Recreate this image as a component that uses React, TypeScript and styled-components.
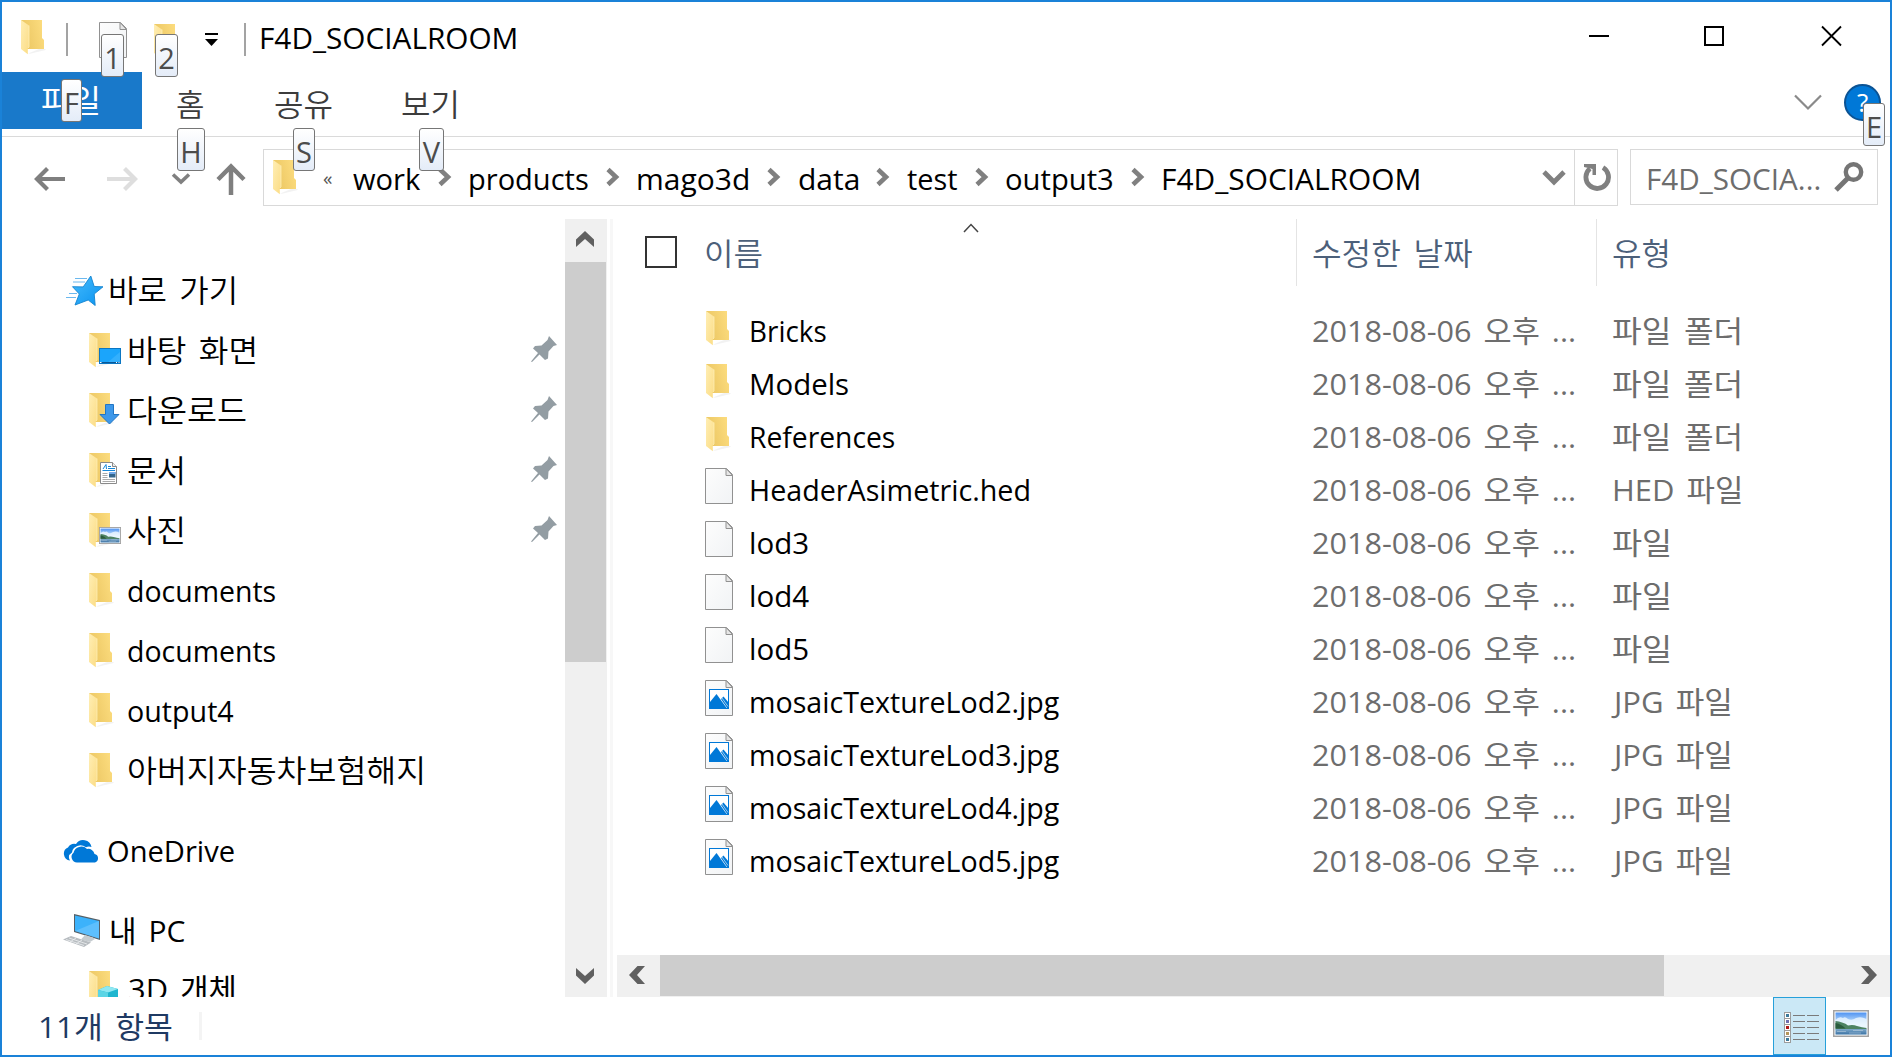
import React, { useLayoutEffect, useRef, useState } from "react";
import styled, { createGlobalStyle, css } from "styled-components";

const GlobalStyle = createGlobalStyle`
  * { box-sizing: border-box; }
  body { margin: 0; background: #fff; overflow: hidden; }
  svg { display: block; flex: none; }
`;

/* ---------- text fitted to a set width ---------- */

const FitBox = styled.span<{ $w: number }>`
  display: block;
  flex: none;
  width: ${(p) => p.$w}px;
  white-space: nowrap;
`;

const FitInner = styled.span<{ $size: number; $color: string; $weight: number }>`
  display: inline-block;
  transform-origin: 0 50%;
  font-family: "Open Sans", "Noto Sans CJK KR", sans-serif;
  font-size: ${(p) => p.$size}px;
  font-weight: ${(p) => p.$weight};
  line-height: 40px;
  word-spacing: 4px;
  color: ${(p) => p.$color};
`;

interface FitProps {
  children: string;
  w: number;
  size?: number;
  color?: string;
  weight?: number;
}

function Fit({ children, w, size = 30, color = "#000", weight = 400 }: FitProps) {
  const ref = useRef<HTMLSpanElement>(null);
  const [scale, setScale] = useState(1);
  useLayoutEffect(() => {
    if (ref.current) setScale(w / ref.current.offsetWidth);
  }, [w, children, size]);
  return (
    <FitBox $w={w}>
      <FitInner ref={ref} $size={size} $color={color} $weight={weight} style={{ transform: `scaleX(${scale})` }}>
        {children}
      </FitInner>
    </FitBox>
  );
}

/* ---------- window ---------- */

const Window = styled.div`
  width: 1892px;
  height: 1057px;
  border: 2px solid #1a82d8;
  background: #fff;
  display: flex;
  flex-direction: column;
  overflow: hidden;
`;

const TitleBar = styled.header`
  height: 70px;
  flex: none;
  display: flex;
  align-items: flex-start;
  padding-left: 19px;
`;

const QuickItem = styled.div<{ $ml: number; $mt: number }>`
  position: relative;
  margin: ${(p) => p.$mt}px 0 0 ${(p) => p.$ml}px;
`;

const Rule = styled.div<{ $ml: number }>`
  width: 2px;
  height: 33px;
  margin: 21px 0 0 ${(p) => p.$ml}px;
  background: #a3a3a3;
`;

const TitleText = styled.h1`
  margin: 16px 0 0 13px;
  font-weight: 400;
`;

const WindowButtons = styled.div`
  display: flex;
  margin: 23px 48px 0 auto;
  gap: 93px;
`;

const KeyTip = styled.kbd<{ $x: number; $y: number; $w: number }>`
  position: absolute;
  z-index: 2;
  left: ${(p) => p.$x}px;
  top: ${(p) => p.$y}px;
  width: ${(p) => p.$w}px;
  height: 43px;
  border: 1px solid #767676;
  border-radius: 3px;
  background: linear-gradient(#fff, #e4ecf8);
  display: flex;
  align-items: center;
  justify-content: center;
  font: 400 29px/38px "Open Sans", sans-serif;
  color: #4c4c4c;
  padding-top: 4px;
`;

const TabRow = styled.nav`
  height: 65px;
  flex: none;
  display: flex;
  border-bottom: 1px solid #dadada;
`;

const FileTab = styled.div`
  position: relative;
  width: 140px;
  height: 57px;
  padding: 8px 0 0 39px;
  background: #1979ca;
`;

const Tab = styled.div<{ $ml: number }>`
  position: relative;
  margin-left: ${(p) => p.$ml}px;
  padding-top: 12px;
`;

const RibbonTools = styled.div`
  position: relative;
  margin: 10px 9px 0 auto;
  display: flex;
  gap: 21px;
  align-items: center;
  height: 40px;
`;

const Help = styled.div`
  width: 37px;
  height: 37px;
  border-radius: 50%;
  border: 2px solid #0b5394;
  background: #0078d7;
  color: #fff;
  font: 400 26px/32px "Open Sans", sans-serif;
  text-align: center;
`;

const NavRow = styled.div`
  height: 82px;
  flex: none;
  display: flex;
  padding-top: 12px;
`;

const NavArrows = styled.div`
  width: 261px;
  height: 57px;
  padding: 2px 0 0 32px;
  display: flex;
  align-items: center;
`;

const Gap = styled.div<{ $w: number }>`
  flex: none;
  width: ${(p) => p.$w}px;
`;

const AddressBox = styled.div`
  width: 1355px;
  height: 57px;
  border: 1px solid #d9d9d9;
  display: flex;
  align-items: center;
  padding-left: 8px;
`;

const Older = styled.span`
  width: 12px;
  margin-left: 17px;
  font: 400 19px/20px "Open Sans", sans-serif;
  color: #555;
`;

const Crumb = styled.span<{ $ml: number }>`
  margin: 3px 0 0 ${(p) => p.$ml}px;
`;

const CrumbMark = styled.span`
  margin-bottom: 2px;
`;

const AddressTools = styled.div`
  margin-left: auto;
  height: 100%;
  display: flex;
  align-items: center;
`;

const RefreshCell = styled.div`
  width: 43px;
  height: 100%;
  margin-left: 7px;
  padding-left: 2px;
  border-left: 1px solid #d9d9d9;
  display: flex;
  align-items: center;
  justify-content: center;
`;

const SearchBox = styled.div`
  width: 248px;
  height: 56px;
  margin-left: 12px;
  border: 1px solid #d9d9d9;
  display: flex;
  align-items: center;
  padding: 0 13px 0 15px;
  justify-content: space-between;
`;

const SearchText = styled.div`
  margin-top: 3px;
`;

const Body = styled.div`
  height: 778px;
  flex: none;
  display: flex;
`;

const Sidebar = styled.aside`
  width: 563px;
  height: 778px;
  overflow: hidden;
  padding-top: 41px;
`;

const TreeRow = styled.div<{ $level: number; $gap?: number }>`
  height: 60px;
  margin-top: ${(p) => p.$gap ?? 0}px;
  padding-left: ${(p) => (p.$level ? 86 : 61)}px;
  display: flex;
  align-items: center;
`;

const TreeIcon = styled.div<{ $w: number; $dx?: number }>`
  width: ${(p) => p.$w}px;
  padding: 2px 0 0 ${(p) => p.$dx ?? 0}px;
`;

const TreeLabel = styled.div<{ $latin?: boolean }>`
  padding-top: ${(p) => (p.$latin ? 1 : 0)}px;
`;

const PinSlot = styled.div`
  margin: 0 8px 2px auto;
`;

const VScroll = styled.div`
  width: 42px;
  height: 778px;
  background: #f0f0f0;
  display: flex;
  flex-direction: column;
  align-items: center;
`;

const VThumb = styled.div`
  width: 41px;
  height: 400px;
  align-self: flex-start;
  background: #cdcdcd;
`;

const arrowCell = css`
  display: flex;
  align-items: center;
  justify-content: center;
`;

const VArrow = styled.div`
  ${arrowCell}
  width: 42px;
  height: 43px;
  padding: 0 2px 4px 0;
  &:last-child { margin-top: auto; padding-bottom: 0; }
`;

const Divider = styled.div`
  width: 3px;
  margin: 0 4px 0 3px;
  background: #f7f7f7;
`;

const Main = styled.main`
  flex: 1;
  display: flex;
  flex-direction: column;
`;

const HeadRow = styled.div`
  height: 67px;
  display: flex;
  padding-left: 28px;
`;

const CheckBox = styled.div`
  width: 32px;
  height: 32px;
  margin-top: 17px;
  border: 2px solid #333;
`;

const HeadCell = styled.div<{ $w: number; $pl: number; $line?: boolean }>`
  position: relative;
  width: ${(p) => p.$w}px;
  padding: 14px 0 0 ${(p) => p.$pl}px;
  border-left: ${(p) => (p.$line ? "1px solid #e4e4e4" : "0")};
`;

const SortMark = styled.div`
  position: absolute;
  left: 286px;
  top: 4px;
`;

const FileList = styled.div`
  margin-top: 18px;
  height: 651px;
`;

const FileRow = styled.div`
  height: 53px;
  padding-left: 88px;
  display: flex;
  align-items: center;
`;

const FileIcon = styled.div<{ $dir: boolean }>`
  width: 44px;
  padding-bottom: ${(p) => (p.$dir ? 3 : 7)}px;
`;

const NameCell = styled.div`
  width: 563px;
`;

const DateCell = styled.div`
  width: 300px;
`;

const TypeCell = styled.div<{ $dx: number }>`
  padding-left: ${(p) => p.$dx}px;
`;

const HScroll = styled.div`
  height: 42px;
  background: #f0f0f0;
  display: flex;
  align-items: flex-start;
`;

const HThumb = styled.div`
  width: 1004px;
  height: 41px;
  background: #cdcdcd;
`;

const HArrow = styled.div`
  ${arrowCell}
  width: 43px;
  height: 40px;
  padding-right: 3px;
  &:last-child { margin-left: auto; padding-right: 0; }
`;

const StatusBar = styled.footer`
  height: 58px;
  display: flex;
  align-items: flex-start;
  padding-left: 36px;
`;

const StatusText = styled.div`
  padding-top: 10px;
`;

const StatusRule = styled.div`
  width: 3px;
  height: 28px;
  margin: 15px 0 0 26px;
  background: #f4f4f4;
`;

const DetailsButton = styled.div`
  width: 53px;
  height: 58px;
  margin-left: auto;
  border: 1px solid #26a0da;
  background: #cbe8f6;
  padding: 13px 0 0 9px;
`;

const ThumbButton = styled.div`
  margin: 13px 21px 0 7px;
`;

/* ---------- icons ---------- */

const DefsHolder = styled.svg`
  position: absolute;
`;

const Defs = () => (
  <DefsHolder width="0" height="0">
    <defs>
      <linearGradient id="back" x1="0" x2="1" y1=".6" y2=".3">
        <stop offset="0" stopColor="#eac561" />
        <stop offset="1" stopColor="#fcdc7e" />
      </linearGradient>
      <linearGradient id="flap" x1="0" x2="1" y1="0" y2="1">
        <stop offset="0" stopColor="#ffeeb4" />
        <stop offset="1" stopColor="#fbdc84" />
      </linearGradient>
      <linearGradient id="blue" x1="0" x2="1" y1="0" y2="1">
        <stop offset="0" stopColor="#45bbfc" />
        <stop offset="1" stopColor="#0a93f0" />
      </linearGradient>
      <linearGradient id="page" x1="0" x2="1" y1="0" y2="1">
        <stop offset="0" stopColor="#fdfdfd" />
        <stop offset="1" stopColor="#f1f3f5" />
      </linearGradient>
      <linearGradient id="sky" x1="0" x2="0" y1="0" y2="1">
        <stop offset="0" stopColor="#4f93f2" />
        <stop offset=".55" stopColor="#d9f0fd" />
        <stop offset="1" stopColor="#d9f0fd" />
      </linearGradient>
      <linearGradient id="lake" x1="0" x2="0" y1="0" y2="1">
        <stop offset="0" stopColor="#7fa9cb" />
        <stop offset="1" stopColor="#3c73a4" />
      </linearGradient>
    </defs>
  </DefsHolder>
);

const FolderShape = () => (
  <>
    <path d="M7 33.6 18 29h7l-1 1.2-15 3.6z" fill="#000" opacity=".05" />
    <path d="M0 0h21v18l2 2v9H6z" fill="url(#back)" />
    <path d="M0 0 8 5.5V27l-1.2 1v6.2L0 29z" fill="url(#flap)" />
    <path d="M8 5.5V27l-1 1" stroke="#fff2c0" strokeWidth=".7" fill="none" />
  </>
);

const Picture = ({ w, h }: { w: number; h: number }) => (
  <svg width={w} height={h} viewBox="0 0 36 27" preserveAspectRatio="none">
    <rect x=".75" y=".75" width="34.5" height="25.5" fill="#fff" stroke="#a2a2a2" strokeWidth="1.5" />
    <rect x="2.500" y="2.500" width="31" height="22" fill="url(#sky)" />
    <path d="M2.500 10q3.500-4 7.500-2 2-2 5 1 4 2 8-1 5-2 10.500 1v9H2.500z" fill="#eef8ff" opacity=".8" />
    <path d="M2.500 11q3.500 0 6.500 1.500 4 1 6 3 5-1 9 .5 5 1.500 9.500 2v1.500H2.500z" fill="#4d8363" />
    <path d="M2.500 13q6 1 10 5.500h-10z" fill="#2b5c3e" />
    <rect x="2.500" y="19" width="31" height="5.500" fill="url(#lake)" />
    <path d="M4 21.500h9M16 23h12M20 20.500h10" stroke="#fff" strokeWidth=".8" opacity=".4" />
  </svg>
);

type Overlay = "desktop" | "download" | "doc" | "picture" | "cube";

const Folder = ({ overlay }: { overlay?: Overlay }) => (
  <svg width="34" height="36" viewBox="-1 0 34 36" overflow="visible">
    <FolderShape />
    {overlay === "desktop" && (
      <g>
        <rect x="10.500" y="15.500" width="21" height="15" fill="#1ba5fb" stroke="#0b76c2" />
        <path d="M18 30 31 19v11z" fill="#4cbcff" opacity=".5" />
        <path d="M11 29.500h20" stroke="#0a5796" />
        <path d="M11 29.500h1.500M27 29.500h1M29.500 29.500h1" stroke="#fff" />
      </g>
    )}
    {overlay === "download" && (
      <path d="M16.500 11.500h8v10h5.500l-9.500 9.500-9.500-9.500h5.500z" fill="#3d98ea" stroke="#2175c4" />
    )}
    {overlay === "doc" && (
      <g>
        <path d="M11.500 9.500h12l4 4v17h-16z" fill="#fff" stroke="#8a8a8a" />
        <path d="M23.500 9.500v4h4" fill="#eee" stroke="#8a8a8a" />
        <path d="m14 16 3-4.500.5 4.500M19 13.500h3M19 15.500h7M13.500 17.500H26" stroke="#1787d8" fill="none" />
        <path d="M13.500 20.500h5M13.500 22.500h5M13.500 24.500h5M13.500 26.500h12.500M13.500 28.500h12.500" stroke="#aaa" />
        <rect x="20" y="19" width="6.500" height="5.500" fill="#35668c" />
        <rect x="20" y="19" width="6.500" height="2" fill="#74a9e8" />
      </g>
    )}
    {overlay === "picture" && (
      <g transform="translate(10 14)">
        <Picture w={22} h={17} />
      </g>
    )}
    {overlay === "cube" && (
      <g>
        <path d="m9 19 9-4 11 3v12l-10 4-10-4z" fill="#1fb6cf" />
        <path d="m9 19 9-4 11 3-10 3.500z" fill="#8fe8f2" />
        <path d="M9 19l10 2.500V34L9 30z" fill="#5bd5e5" />
      </g>
    )}
  </svg>
);

const Page = ({ image }: { image?: boolean }) => (
  <svg width="28" height="36" viewBox="0 0 28 36">
    <path d="M.5.500h21l6 6v29H.5z" fill="url(#page)" stroke="#919191" />
    <path d="M21 .500v7h6.500z" fill="#e6e6e6" stroke="#919191" />
    {image && (
      <g>
        <rect x="4.500" y="9.500" width="19" height="19" fill="#fff" stroke="#0078d7" />
        <path d="m5 22 6.500-8 10.500 14.500H5z" fill="#0078d7" />
        <path d="m16 19 2.500-2.500 5 6v6h-1z" fill="#0078d7" />
        <path d="m17 18 6 8.500" stroke="#fff" strokeWidth=".6" />
      </g>
    )}
  </svg>
);

const Star = () => (
  <svg width="38" height="30" viewBox="0 0 38 30">
    <path d="m24.800 0 3.400 10.500 8.800.3-8.800 7.200 1 11.500-7-5.500L9 29l4.300-11L6.500 10.700l10.700.2z" fill="url(#blue)" stroke="#1383cf" strokeWidth=".9" />
    <path d="M9 2.500h12M7 6h12M3 17.500h8M0 21.500h10" stroke="#6bb8ee" />
  </svg>
);

const Cloud = () => (
  <svg width="37" height="23" viewBox="0 0 37 23">
    <path d="M7 20.500A6.800 6.800 0 0 1 5 7.500 7.500 7.500 0 0 1 13 4a8.500 8.500 0 0 1 15.500 3q-3-1-5.500.3-6-4.500-12 .7-2 2-2 4.500-5 3-2 8z" fill="#0078d7" />
    <path d="M14 22.500a5.500 5.500 0 0 1-3.500-9.700A8 8 0 0 1 24 9a6.200 6.200 0 0 1 7.500 5A4.400 4.400 0 0 1 32 22.500z" fill="#0078d7" />
  </svg>
);

const Computer = () => (
  <svg width="38" height="36" viewBox="0 0 38 36">
    <path d="m11 1 26 6v20L11 19z" fill="#555f66" />
    <path d="m12 2.500 24 5.500v17.500L12 18z" fill="#3cb2fb" />
    <path d="m12 18 24-10v17.500z" fill="#73c8ff" opacity=".6" />
    <path d="m22 22 8 2.500 2 1.500-5 3-9-2.500z" fill="#c6ccd0" />
    <path d="M0 26.500 8 23l20 6.500L21 34z" fill="#b7bcc0" />
    <path d="m3 26.500 18 6M6 25l18 6M7 29l6-4M13 31l6-4" stroke="#eef0f1" strokeWidth=".8" />
  </svg>
);

const Pin = () => (
  <svg width="26" height="26" viewBox="0 0 26 26">
    <path d="M18 0 26 9l-3.500 1-5 5.500-.5 7-3 1.500-5.500-5.500-7.500 7.500L0 25.500l7-8.500L2 12.500l2-2.500 6.500-.5L16.500 4z" fill="#939da3" />
  </svg>
);

const Chevron = ({ w = 14, h = 20, s = 4.6, d = "m2 2.500 8 7.500-8 7.500", color = "#808080" }) => (
  <svg width={w} height={h} viewBox={`0 0 ${w} ${h}`}>
    <path d={d} fill="none" stroke={color} strokeWidth={s} />
  </svg>
);

const Arrow = ({ color }: { color: string }) => (
  <svg width="31" height="24" viewBox="0 0 31 24">
    <path d="M13.500 1.500 3 12l10.500 10.500M3 12h28" fill="none" stroke={color} strokeWidth="4.200" />
  </svg>
);

const Flip = styled.div`
  transform: scaleX(-1);
`;

const ScrollGlyph = ({ turn }: { turn: number }) => (
  <svg width="18" height="18" viewBox="0 0 18 18">
    <path d="M0 9.500 9 1l9 8.500V17L9 9l-9 8z" fill="#606060" transform={`rotate(${turn} 9 9)`} />
  </svg>
);

const DetailsGlyph = () => (
  <svg width="37" height="32" viewBox="0 0 37 32">
    {["#3c7a9b", "#6f70b0", "#b01818", "#b5955a", "#3c7a9b"].map((c, i) => (
      <g key={i}>
        <rect x="1.500" y={1.5 + i * 6} width="6" height="6" fill="#fff" stroke="#9c9c9c" />
        <rect x="3" y={3 + i * 6} width="3" height="3" fill={c} />
        <path d={`M10 ${4.5 + i * 6}h12M24 ${4.5 + i * 6}h12`} stroke="#7a7a7a" />
      </g>
    ))}
  </svg>
);

/* ---------- data ---------- */

const crumbs: { text: string; w: number; gap: number; chev: number }[] = [
  { text: "work", w: 67, gap: 18, chev: 18 },
  { text: "products", w: 121, gap: 16, chev: 17 },
  { text: "mago3d", w: 114, gap: 16, chev: 17 },
  { text: "data", w: 62, gap: 17, chev: 16 },
  { text: "test", w: 51, gap: 17, chev: 17 },
  { text: "output3", w: 109, gap: 16, chev: 17 },
  { text: "F4D_SOCIALROOM", w: 260, gap: 16, chev: 0 },
];

const quick: { text: string; w: number; overlay?: Overlay; pin?: boolean; latin?: boolean }[] = [
  { text: "바탕 화면", w: 131, overlay: "desktop", pin: true },
  { text: "다운로드", w: 120, overlay: "download", pin: true },
  { text: "문서", w: 59, overlay: "doc", pin: true },
  { text: "사진", w: 59, overlay: "picture", pin: true },
  { text: "documents", w: 149, latin: true },
  { text: "documents", w: 149, latin: true },
  { text: "output4", w: 107, latin: true },
  { text: "아버지자동차보험해지", w: 299 },
];

const files: { name: string; w: number; type: string; tw: number; kind: "dir" | "file" | "jpg" }[] = [
  { name: "Bricks", w: 78, type: "파일 폴더", tw: 131, kind: "dir" },
  { name: "Models", w: 100, type: "파일 폴더", tw: 131, kind: "dir" },
  { name: "References", w: 146, type: "파일 폴더", tw: 131, kind: "dir" },
  { name: "HeaderAsimetric.hed", w: 282, type: "HED 파일", tw: 132, kind: "file" },
  { name: "lod3", w: 60, type: "파일", tw: 60, kind: "file" },
  { name: "lod4", w: 60, type: "파일", tw: 60, kind: "file" },
  { name: "lod5", w: 60, type: "파일", tw: 60, kind: "file" },
  ...[2, 3, 4, 5].map((n) => ({
    name: `mosaicTextureLod${n}.jpg`,
    w: 310,
    type: "JPG 파일",
    tw: 119,
    kind: "jpg" as const,
  })),
];

const HEAD = "#4c607a";
const GREY = "#6d6d6d";

export default function App() {
  return (
    <>
      <GlobalStyle />
      <Defs />
      <Window>
        <TitleBar>
          <QuickItem $ml={-1} $mt={18}>
            <Folder />
          </QuickItem>
          <Rule $ml={12} />
          <QuickItem $ml={31} $mt={20}>
            <Page />
            <KeyTip $x={2} $y={12} $w={23}>1</KeyTip>
          </QuickItem>
          <QuickItem $ml={26} $mt={22}>
            <Folder />
            <KeyTip $x={2} $y={10} $w={23}>2</KeyTip>
          </QuickItem>
          <QuickItem $ml={18} $mt={31}>
            <svg width="13" height="14" viewBox="0 0 13 14">
              <path d="M0 1h13" stroke="#000" strokeWidth="2" />
              <path d="M0 6h13l-6.500 7z" fill="#000" />
            </svg>
          </QuickItem>
          <Rule $ml={26} />
          <TitleText>
            <Fit w={259}>F4D_SOCIALROOM</Fit>
          </TitleText>
          <WindowButtons>
            <svg width="22" height="22" viewBox="0 0 22 22">
              <path d="M1 11h20" stroke="#000" strokeWidth="2" />
            </svg>
            <svg width="22" height="22" viewBox="0 0 22 22">
              <rect x="2" y="2" width="18" height="18" fill="none" stroke="#000" strokeWidth="2" />
            </svg>
            <svg width="24" height="22" viewBox="0 0 24 22">
              <path d="m4 1.500 19 19M23 1.500l-19 19" stroke="#000" strokeWidth="1.800" />
            </svg>
          </WindowButtons>
        </TitleBar>

        <TabRow>
          <FileTab>
            <Fit w={60} size={31} color="#fff">파일</Fit>
            <KeyTip $x={59} $y={7} $w={21}>F</KeyTip>
          </FileTab>
          <Tab $ml={34}>
            <Fit w={29} size={31} color="#3c3c3c" weight={350}>홈</Fit>
            <KeyTip $x={1} $y={56} $w={28}>H</KeyTip>
          </Tab>
          <Tab $ml={69}>
            <Fit w={59} size={31} color="#3c3c3c" weight={350}>공유</Fit>
            <KeyTip $x={19} $y={56} $w={22}>S</KeyTip>
          </Tab>
          <Tab $ml={68}>
            <Fit w={59} size={31} color="#3c3c3c" weight={350}>보기</Fit>
            <KeyTip $x={18} $y={56} $w={25}>V</KeyTip>
          </Tab>
          <RibbonTools>
            <Chevron w={30} h={18} s={2.2} d="M2 2.500 15 15.500 28 2.500" color="#8a8a8a" />
            <Help>?</Help>
            <KeyTip $x={70} $y={21} $w={22}>E</KeyTip>
          </RibbonTools>
        </TabRow>

        <NavRow>
          <NavArrows>
            <Arrow color="#7f7f7f" />
            <Gap $w={42} />
            <Flip>
              <Arrow color="#dedede" />
            </Flip>
            <Gap $w={33} />
            <Chevron w={20} h={14} s={3.6} d="M2 2.500 10 10 18 2.500" />
            <Gap $w={25} />
            <svg width="30" height="32" viewBox="0 0 30 32">
              <path d="M2 16.500 15 3.500l13 13M15 4v28" fill="none" stroke="#7f7f7f" strokeWidth="4.500" />
            </svg>
          </NavArrows>
          <AddressBox>
            <Folder />
            <Older>«</Older>
            {crumbs.map((c) => (
              <React.Fragment key={c.text}>
                <Crumb $ml={c.gap}>
                  <Fit w={c.w}>{c.text}</Fit>
                </Crumb>
                {c.chev > 0 && (
                  <>
                    <Gap $w={c.chev} />
                    <CrumbMark><Chevron /></CrumbMark>
                  </>
                )}
              </React.Fragment>
            ))}
            <AddressTools>
              <Chevron w={26} h={18} s={4.8} d="M3 3 13 13 23 3" />
              <RefreshCell>
                <svg width="28" height="30" viewBox="0 0 28 30">
                  <path d="M20 4.500A11.300 11.300 0 1 1 7 5.500" fill="none" stroke="#808080" strokeWidth="4.800" />
                  <path d="M1 1h12v11H9.500V6L1 4z" fill="#808080" />
                </svg>
              </RefreshCell>
            </AddressTools>
          </AddressBox>
          <SearchBox>
            <SearchText>
              <Fit w={175} color={GREY}>F4D_SOCIA...</Fit>
            </SearchText>
            <svg width="30" height="30" viewBox="0 0 30 30">
              <circle cx="19.500" cy="10" r="7.700" fill="none" stroke="#757575" strokeWidth="4.400" />
              <path d="M14 16 2 28" stroke="#757575" strokeWidth="5" />
            </svg>
          </SearchBox>
        </NavRow>

        <Body>
          <Sidebar>
            <TreeRow $level={0}>
              <TreeIcon $w={45} $dx={3}><Star /></TreeIcon>
              <TreeLabel><Fit w={130} size={31} weight={350}>바로 가기</Fit></TreeLabel>
            </TreeRow>
            {quick.map((q, i) => (
              <TreeRow $level={1} key={i}>
                <TreeIcon $w={39}><Folder overlay={q.overlay} /></TreeIcon>
                <TreeLabel $latin={q.latin}>
                  <Fit w={q.w} size={q.latin ? 30 : 31} weight={q.latin ? 400 : 350}>{q.text}</Fit>
                </TreeLabel>
                {q.pin && <PinSlot><Pin /></PinSlot>}
              </TreeRow>
            ))}
            <TreeRow $level={0} $gap={20}>
              <TreeIcon $w={44}><Cloud /></TreeIcon>
              <TreeLabel $latin><Fit w={128}>OneDrive</Fit></TreeLabel>
            </TreeRow>
            <TreeRow $level={0} $gap={20}>
              <TreeIcon $w={46}><Computer /></TreeIcon>
              <TreeLabel $latin><Fit w={76}>내 PC</Fit></TreeLabel>
            </TreeRow>
            <TreeRow $level={1} $gap={-2}>
              <TreeIcon $w={40}><Folder overlay="cube" /></TreeIcon>
              <TreeLabel $latin><Fit w={109}>3D 개체</Fit></TreeLabel>
            </TreeRow>
          </Sidebar>
          <VScroll>
            <VArrow><ScrollGlyph turn={0} /></VArrow>
            <VThumb />
            <VArrow><ScrollGlyph turn={180} /></VArrow>
          </VScroll>
          <Divider />
          <Main>
            <HeadRow>
              <CheckBox />
              <HeadCell $w={619} $pl={27}>
                <Fit w={59} size={31} color={HEAD} weight={350}>이름</Fit>
                <SortMark>
                  <Chevron w={16} h={10} s={1.5} d="M1 9 8 1.500 15 9" color="#444" />
                </SortMark>
              </HeadCell>
              <HeadCell $w={300} $pl={15} $line>
                <Fit w={161} size={31} color={HEAD} weight={350}>수정한 날짜</Fit>
              </HeadCell>
              <HeadCell $w={290} $pl={15} $line>
                <Fit w={59} size={31} color={HEAD} weight={350}>유형</Fit>
              </HeadCell>
            </HeadRow>
            <FileList>
              {files.map((f) => (
                <FileRow key={f.name}>
                  <FileIcon $dir={f.kind === "dir"}>
                    {f.kind === "dir" ? <Folder /> : <Page image={f.kind === "jpg"} />}
                  </FileIcon>
                  <NameCell><Fit w={f.w}>{f.name}</Fit></NameCell>
                  <DateCell><Fit w={264} color={GREY}>2018-08-06 오후 ...</Fit></DateCell>
                  <TypeCell $dx={f.kind === "jpg" ? 2 : 0}>
                    <Fit w={f.tw} color={GREY}>{f.type}</Fit>
                  </TypeCell>
                </FileRow>
              ))}
            </FileList>
            <HScroll>
              <HArrow><ScrollGlyph turn={-90} /></HArrow>
              <HThumb />
              <HArrow><ScrollGlyph turn={90} /></HArrow>
            </HScroll>
          </Main>
        </Body>

        <StatusBar>
          <StatusText><Fit w={135} color="#1f3a63">11개 항목</Fit></StatusText>
          <StatusRule />
          <DetailsButton><DetailsGlyph /></DetailsButton>
          <ThumbButton><Picture w={36} h={27} /></ThumbButton>
        </StatusBar>
      </Window>
    </>
  );
}
